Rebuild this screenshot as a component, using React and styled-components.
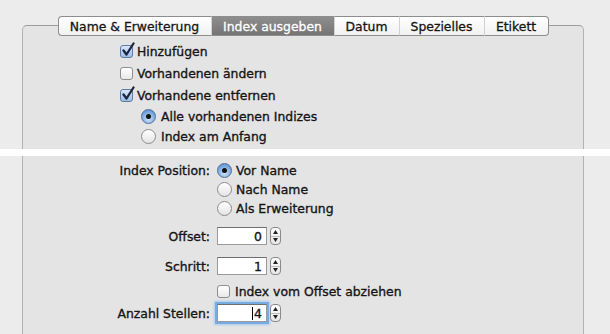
import React from "react";
import styled, { createGlobalStyle } from "styled-components";

const GlobalStyle = createGlobalStyle`
  html, body {
    margin: 0;
    padding: 0;
    background: #ececec;
  }
  body {
    font-family: "DejaVu Sans", "Liberation Sans", sans-serif;
    font-size: 12.4px;
    color: #151515;
    -webkit-text-stroke: 0.35px #151515;
  }
`;

const Screen = styled.div`
  width: 610px;
  height: 334px;
  overflow: hidden;
  display: flex;
  flex-direction: column;
`;

const Shot = styled.div`
  display: flex;
  height: ${(p) => p.$h}px;
  padding: ${(p) => p.$top || 0}px 26px 0 22px;
  box-sizing: border-box;
  background: #ececec;
`;

const Band = styled.div`
  height: 7px;
  background: #ffffff;
`;

const Panel = styled.div`
  flex: 1;
  display: flex;
  flex-direction: column;
  background: #e4e4e4;
  border-left: 1px solid #b3b3b3;
  border-right: 1px solid #b3b3b3;
  ${(p) =>
    p.$tabbed &&
    `
    border-top: 1px solid #9c9c9c;
    border-top-left-radius: 5px;
    border-top-right-radius: 5px;
  `}
`;

const TabBar = styled.div`
  display: flex;
  justify-content: center;
  margin-top: -10px;
  height: 20px;
`;

const Tab = styled.div`
  display: flex;
  align-items: center;
  justify-content: center;
  width: ${(p) => p.$w}px;
  box-sizing: border-box;
  border-top: 1px solid #8d8d8d;
  border-bottom: 1px solid #8d8d8d;
  border-left: 1px solid ${(p) => (p.$first ? "#8d8d8d" : "#d2d2d2")};
  border-right: ${(p) => (p.$last ? "1px solid #8d8d8d" : "none")};
  border-radius: ${(p) =>
    p.$first ? "4px 0 0 4px" : p.$last ? "0 4px 4px 0" : "0"};
  background: ${(p) =>
    p.$active
      ? "linear-gradient(#8e8e8e, #747474)"
      : "linear-gradient(#ffffff, #f1f1f1)"};
  color: ${(p) => (p.$active ? "#ffffff" : "#151515")};
  -webkit-text-stroke: 0.3px ${(p) => (p.$active ? "#ffffff" : "#151515")};
  white-space: nowrap;
`;

const TopBody = styled.div`
  display: flex;
  flex-direction: column;
  padding-top: 4px;
`;

const OptionRow = styled.div`
  display: flex;
  align-items: center;
  gap: ${(p) => (p.$radio ? 5 : 4)}px;
  height: ${(p) => p.$h}px;
  padding-left: ${(p) => p.$indent}px;
  white-space: nowrap;
`;

const BoxWrap = styled.span`
  position: relative;
  display: inline-block;
  width: 13px;
  height: 13px;
  flex: none;
`;

const Box = styled.span`
  display: block;
  width: 13px;
  height: 13px;
  box-sizing: border-box;
  border-radius: 3px;
  border: 1px solid ${(p) => (p.$on ? "#5e7aa3" : "#8e8e8e")};
  background: ${(p) =>
    p.$on
      ? "linear-gradient(#dbe8f8, #9dbde6)"
      : "linear-gradient(#ffffff, #e9e9e9)"};
`;

const Tick = styled.svg`
  position: absolute;
  left: 1px;
  top: -3px;
`;

const Radio = styled.span`
  display: flex;
  align-items: center;
  justify-content: center;
  width: 15px;
  height: 15px;
  flex: none;
  box-sizing: border-box;
  border-radius: 50%;
  border: 1px solid ${(p) => (p.$on ? "#4f6f9c" : "#8c8c8c")};
  background: ${(p) =>
    p.$on
      ? "radial-gradient(circle at 50% 70%, #cfe2f8, #6e9fdb 70%, #4f83c8)"
      : "linear-gradient(#ffffff, #e4e4e4)"};
`;

const Dot = styled.span`
  width: 5px;
  height: 5px;
  border-radius: 50%;
  background: #111;
`;

const Form = styled.div`
  display: grid;
  grid-template-columns: 187px auto;
  column-gap: 7px;
  align-items: center;
  padding-top: 5px;
`;

const Label = styled.div`
  text-align: right;
  white-space: nowrap;
  align-self: ${(p) => (p.$top ? "start" : "center")};
  line-height: ${(p) => (p.$top ? "19px" : "normal")};
  margin-top: ${(p) => p.$mt || 0}px;
`;

const Cell = styled.div`
  display: flex;
  flex-direction: column;
  margin-top: ${(p) => p.$mt || 0}px;
`;

const RadioLine = styled.div`
  display: flex;
  align-items: center;
  gap: 4px;
  height: 19px;
  white-space: nowrap;
`;

const FieldRow = styled.div`
  display: flex;
  align-items: center;
  gap: 3px;
  margin-top: ${(p) => p.$mt || 0}px;
`;

const Field = styled.div`
  display: flex;
  align-items: center;
  justify-content: flex-end;
  width: 50px;
  height: 18px;
  box-sizing: border-box;
  padding-right: 4px;
  background: #ffffff;
  border: 1px solid #9a9a9a;
  border-top-color: #6f6f6f;
  box-shadow: ${(p) =>
    p.$focus ? "0 0 0 2px #78abe2, 0 0 2px 3px #a9cbee" : "none"};
`;

const Caret = styled.span`
  width: 1px;
  height: 13px;
  background: #000;
  margin-right: 1px;
`;

const Stepper = styled.div`
  display: flex;
  flex-direction: column;
  width: 11px;
  height: 18px;
  box-sizing: border-box;
  border: 1px solid #8a8a8a;
  border-radius: 4px;
  background: linear-gradient(#ffffff, #e6e6e6);
  overflow: hidden;
`;

const StepHalf = styled.div`
  flex: 1;
  display: flex;
  align-items: center;
  justify-content: center;
  & + & {
    border-top: 1px solid #bdbdbd;
  }
`;

const Check = ({ on }) => (
  <BoxWrap>
    <Box $on={on} />
    {on && (
      <Tick width="15" height="15" viewBox="0 0 15 15">
        <path
          d="M2.5 8.5 L5.5 12.5 L12.5 1.5"
          fill="none"
          stroke="#1b2640"
          strokeWidth="2.3"
          strokeLinecap="round"
          strokeLinejoin="round"
        />
      </Tick>
    )}
  </BoxWrap>
);

const RadioButton = ({ on }) => <Radio $on={on}>{on && <Dot />}</Radio>;

const Spin = () => (
  <Stepper>
    <StepHalf>
      <svg width="5" height="4" viewBox="0 0 5 4">
        <path d="M2.5 0 L5 4 L0 4 Z" fill="#222" />
      </svg>
    </StepHalf>
    <StepHalf>
      <svg width="5" height="4" viewBox="0 0 5 4">
        <path d="M0 0 L5 0 L2.5 4 Z" fill="#222" />
      </svg>
    </StepHalf>
  </Stepper>
);

const tabs = [
  { label: "Name & Erweiterung", w: 153 },
  { label: "Index ausgeben", w: 123, active: true },
  { label: "Datum", w: 65 },
  { label: "Spezielles", w: 85 },
  { label: "Etikett", w: 65 },
];

const App = () => {
  return (
    <Screen>
      <GlobalStyle />
      <Shot $h={149} $top={25}>
        <Panel $tabbed>
          <TabBar>
            {tabs.map((t, idx) => (
              <Tab
                key={t.label}
                $w={t.w}
                $active={t.active}
                $first={idx === 0}
                $last={idx === tabs.length - 1}
              >
                {t.label}
              </Tab>
            ))}
          </TabBar>
          <TopBody>
            <OptionRow $h={22} $indent={97}>
              <Check on />
              Hinzufügen
            </OptionRow>
            <OptionRow $h={22} $indent={97}>
              <Check />
              Vorhandenen ändern
            </OptionRow>
            <OptionRow $h={22} $indent={97}>
              <Check on />
              Vorhandene entfernen
            </OptionRow>
            <OptionRow $h={20} $indent={118} $radio>
              <RadioButton on />
              Alle vorhandenen Indizes
            </OptionRow>
            <OptionRow $h={20} $indent={118} $radio>
              <RadioButton />
              Index am Anfang
            </OptionRow>
          </TopBody>
        </Panel>
      </Shot>
      <Band />
      <Shot $h={178}>
        <Panel>
          <Form>
            <Label $top>Index Position:</Label>
            <Cell>
              <RadioLine>
                <RadioButton on />
                Vor Name
              </RadioLine>
              <RadioLine>
                <RadioButton />
                Nach Name
              </RadioLine>
              <RadioLine>
                <RadioButton />
                Als Erweiterung
              </RadioLine>
            </Cell>

            <Label $mt={9}>Offset:</Label>
            <FieldRow $mt={9}>
              <Field>0</Field>
              <Spin />
            </FieldRow>

            <Label $mt={12}>Schritt:</Label>
            <FieldRow $mt={12}>
              <Field>1</Field>
              <Spin />
            </FieldRow>

            <span />
            <Cell $mt={6}>
              <OptionRow $h={20} $indent={0} $radio>
                <Check />
                Index vom Offset abziehen
              </OptionRow>
            </Cell>

            <Label $mt={3}>Anzahl Stellen:</Label>
            <FieldRow $mt={3}>
              <Field $focus>
                <Caret />4
              </Field>
              <Spin />
            </FieldRow>
          </Form>
        </Panel>
      </Shot>
    </Screen>
  );
};

export default App;
